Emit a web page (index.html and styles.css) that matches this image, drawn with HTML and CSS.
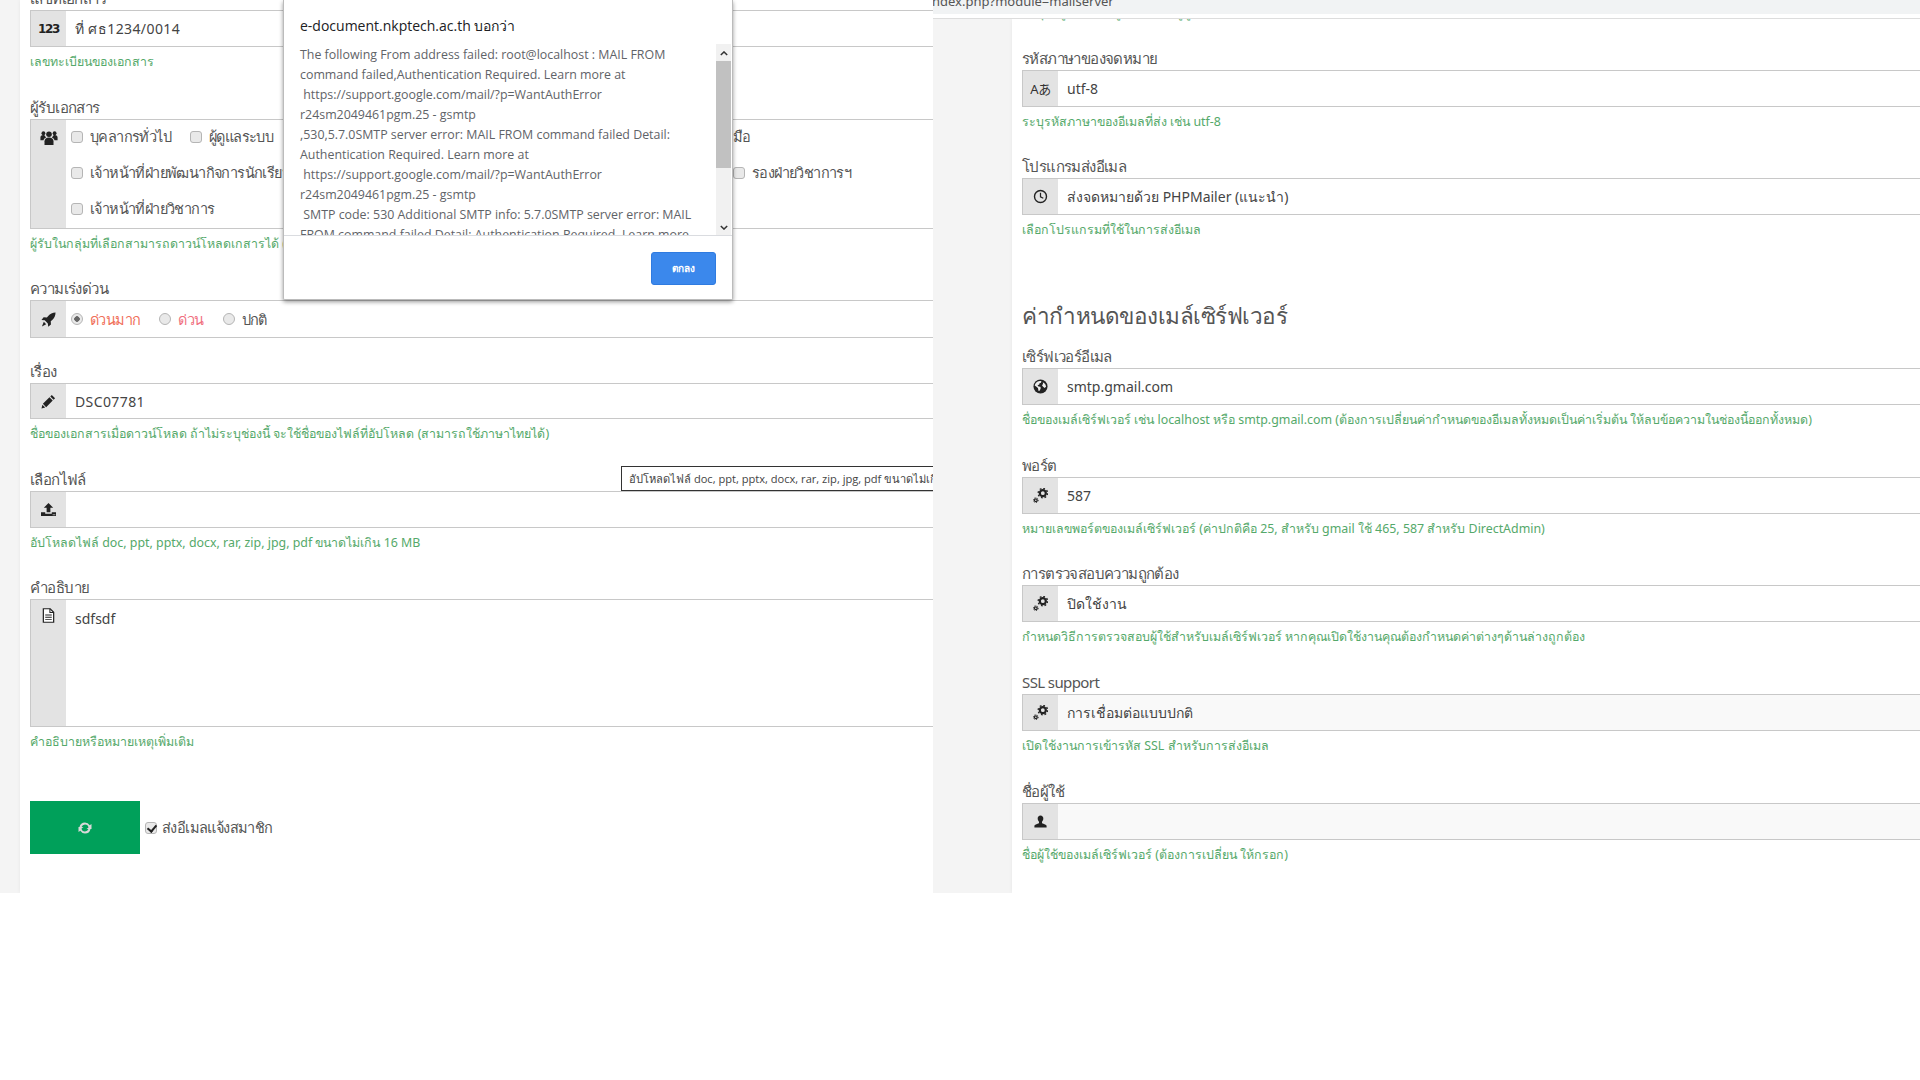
FILE: index.html
```html
<!DOCTYPE html>
<html lang="th">
<head>
<meta charset="utf-8">
<title>e-document</title>
<link rel="stylesheet" href="styles.css">
</head>
<body>
<svg class="sprite" aria-hidden="true">
  <symbol id="i-users" viewBox="0 0 16 14"><circle cx="8" cy="4" r="2.6"/><path d="M3.8 14v-3.6C3.8 8.4 5.5 7 8 7s4.200 1.400 4.200 3.400V14z"/><circle cx="2.800" cy="3" r="1.800"/><circle cx="13.200" cy="3" r="1.800"/><path d="M0 9.500V7c0-1.300 1-2.300 2.600-2.300.5 0 1 .1 1.400.4C4.400 6 5 6.600 5.400 6.900 3.800 7.500 3 8.500 2.900 9.500zM16 9.500V7c0-1.300-1-2.300-2.600-2.300-.5 0-1 .1-1.400.4-.4.900-1 1.500-1.400 1.800 1.600.6 2.400 1.600 2.500 2.600z"/></symbol>
  <symbol id="i-rocket" viewBox="0 0 16 16"><path d="M15.500.5c-3.200.2-5.800 1.500-7.800 3.700L6.300 5.800 2.800 5.600.5 8.500l3.500.4 3.300 3.300.4 3.500 2.900-2.300-.2-3.500 1.600-1.400c2.200-2 3.500-4.600 3.500-8z"/><path d="M3 10.500l2.500 2.500L1 15.500z"/></symbol>
  <symbol id="i-pencil" viewBox="0 0 16 16"><path d="M11.500 1l3.500 3.500-1.600 1.600-3.500-3.500zM9 3.500L12.500 7 5.500 14 2 10.500zM1.500 11.500L4.500 14.500.5 15.500z"/></symbol>
  <symbol id="i-upload" viewBox="0 0 16 16"><path d="M8 1l5 5H10v5H6V6H3zM0 11h4.500v1.500h7V11H16v4H0z"/><path d="M12.500 13h1v1h-1zM14.200 13h1v1h-1z" fill="#e3e3e3"/></symbol>
  <symbol id="i-file" viewBox="0 0 14 16"><path d="M1.500.8h7.300l3.700 3.700v10.700h-11z" fill="#fff" stroke="#222" stroke-width="1.300"/><path d="M8.500.8v4h4" fill="none" stroke="#222" stroke-width="1.100"/><path d="M3.500 7h7v1h-7zM3.500 9.300h7v1h-7zM3.500 11.600h7v1h-7z"/></symbol>
  <symbol id="i-refresh" viewBox="0 0 16 16"><path d="M8 2.500a5.500 5.500 0 0 1 4.700 2.700L14.500 4v5H9.500l2-1.500A3.500 3.500 0 0 0 8 4.500 3.600 3.600 0 0 0 4.600 7H2.500A5.600 5.600 0 0 1 8 2.500zM8 13.500a5.500 5.500 0 0 1-4.700-2.700L1.500 12V7h5l-2 1.500A3.500 3.500 0 0 0 8 11.500 3.600 3.600 0 0 0 11.400 9h2.100A5.600 5.600 0 0 1 8 13.500z"/></symbol>
  <symbol id="i-clock" viewBox="0 0 16 16"><circle cx="8" cy="8" r="6.400" fill="none" stroke="#222" stroke-width="1.500"/><path d="M8 4v4.300l3 1.500" fill="none" stroke="#222" stroke-width="1.300"/></symbol>
  <symbol id="i-globe" viewBox="0 0 16 16"><circle cx="8" cy="8" r="7.500"/><path d="M4.500 2.800C6 2 7.500 1.900 9 2.300L8.500 4l-1.500.5L6.500 6 4.800 6.500l1 1.500 2 .2.500 1.500-1 2.500-1.400.5-.6-3L3 7.800 1.800 6.800C2.300 5 3.200 3.700 4.500 2.800zM10.500 3.500l2.500 1.800 1 2.700-1.500 1.500-1.800-1.200-1.200-1.800 1.200-.8z" fill="#eee"/></symbol>
  <symbol id="i-cogs" viewBox="0 0 16 16"><circle cx="10.500" cy="5.500" r="3.200" fill="none" stroke="#222" stroke-width="2.400"/><circle cx="10.500" cy="5.500" r="5" fill="none" stroke="#222" stroke-width="1.500" stroke-dasharray="1.900 2"/><circle cx="3" cy="13" r="1.500" fill="none" stroke="#222" stroke-width="1.300"/><circle cx="3" cy="13" r="2.600" fill="none" stroke="#222" stroke-width="1" stroke-dasharray="1.200 1.400"/></symbol>
  <symbol id="i-user" viewBox="0 0 16 16"><path d="M8 1.500c1.900 0 3 1.400 3 3.300 0 1.300-.6 2.700-1.400 3.400v1.300c0 .7 4.400 1.400 4.900 3v2h-13v-2c.5-1.600 4.900-2.300 4.900-3V8.200C5.600 7.500 5 6.100 5 4.800c0-1.900 1.100-3.300 3-3.300z"/></symbol>
  <symbol id="i-up" viewBox="0 0 10 6"><path d="M1 5l4-4 4 4" fill="none" stroke="#333" stroke-width="1.800"/></symbol>
  <symbol id="i-down" viewBox="0 0 10 6"><path d="M1 1l4 4 4-4" fill="none" stroke="#333" stroke-width="1.800"/></symbol>
</svg>

<main class="stage">
  <section class="win win-left">
    <div class="sheet sheet-left">
      <div class="field">
        <label class="lbl">เลขที่เอกสาร</label>
        <div class="box"><span class="addon"><b class="num-icon">123</b></span><div class="val val-wide">ที่ ศธ1234/0014</div></div>
        <p class="help">เลขทะเบียนของเอกสาร</p>
      </div>
      <div class="field">
        <label class="lbl">ผู้รับเอกสาร</label>
        <div class="box box-groups"><span class="addon addon-top"><svg class="ico ico-users"><use href="#i-users"/></svg></span>
          <div class="groups">
            <div class="grow"><label class="chk"><input type="checkbox">บุคลากรทั่วไป</label><label class="chk"><input type="checkbox">ผู้ดูแลระบบ</label><span class="chk far-a">มือ</span></div>
            <div class="grow"><label class="chk"><input type="checkbox">เจ้าหน้าที่ฝ่ายพัฒนากิจการนักเรียน</label><label class="chk far-b"><input type="checkbox">รองฝ่ายวิชาการฯ</label></div>
            <div class="grow"><label class="chk"><input type="checkbox">เจ้าหน้าที่ฝ่ายวิชาการ</label></div>
          </div>
        </div>
        <p class="help">ผู้รับในกลุ่มที่เลือกสามารถดาวน์โหลดเกสารได้ (สามารถเลือกได้หลายกลุ่ม)</p>
      </div>
      <div class="field field-nohelp">
        <label class="lbl">ความเร่งด่วน</label>
        <div class="box box-urgent"><span class="addon"><svg class="ico"><use href="#i-rocket"/></svg></span>
          <div class="radios">
            <label class="rad red"><input type="radio" name="u" checked>ด่วนมาก</label>
            <label class="rad pink"><input type="radio" name="u">ด่วน</label>
            <label class="rad"><input type="radio" name="u">ปกติ</label>
          </div>
        </div>
      </div>
      <div class="field">
        <label class="lbl">เรื่อง</label>
        <div class="box box-36"><span class="addon"><svg class="ico"><use href="#i-pencil"/></svg></span><div class="val val-wide">DSC07781</div></div>
        <p class="help">ชื่อของเอกสารเมื่อดาวน์โหลด ถ้าไม่ระบุช่องนี้ จะใช้ชื่อของไฟล์ที่อัปโหลด (สามารถใช้ภาษาไทยได้)</p>
      </div>
      <div class="field">
        <label class="lbl">เลือกไฟล์</label>
        <div class="box"><span class="addon"><svg class="ico"><use href="#i-upload"/></svg></span><div class="val"></div></div>
        <p class="help">อัปโหลดไฟล์ doc, ppt, pptx, docx, rar, zip, jpg, pdf ขนาดไม่เกิน 16 MB</p>
      </div>
      <div class="field">
        <label class="lbl">คำอธิบาย</label>
        <div class="box box-area"><span class="addon addon-top addon-file"><svg class="ico"><use href="#i-file"/></svg></span><div class="val val-area">sdfsdf</div></div>
        <p class="help">คำอธิบายหรือหมายเหตุเพิ่มเติม</p>
      </div>
      <div class="actions">
        <button class="save" type="button"><svg class="ico-save"><use href="#i-refresh"/></svg></button>
        <label class="chk chk-mail"><input type="checkbox" checked>ส่งอีเมลแจ้งสมาชิก</label>
      </div>
    </div>
    <div class="tip">อัปโหลดไฟล์ doc, ppt, pptx, docx, rar, zip, jpg, pdf ขนาดไม่เกิน 16 MB</div>
  </section>

  <section class="win win-right">
    <div class="urlbar"><span class="url">ndex.php?module=mailserver</span></div>
    <div class="urlline"></div>
    <div class="rbody">
      <div class="sheet sheet-right">
        <p class="help help-clipped">ระบุที่อยู่อีเมลของผู้ส่ง สำหรับผู้ดูแลระบบ</p>
        <div class="field field-after-clip">
          <label class="lbl">รหัสภาษาของจดหมาย</label>
          <div class="box"><span class="addon"><span class="lang-icon">Aあ</span></span><div class="val">utf-8</div></div>
          <p class="help">ระบุรหัสภาษาของอีเมลที่ส่ง เช่น utf-8</p>
        </div>
        <div class="field">
          <label class="lbl">โปรแกรมส่งอีเมล</label>
          <div class="box"><span class="addon"><svg class="ico"><use href="#i-clock"/></svg></span><div class="val">ส่งจดหมายด้วย PHPMailer (แนะนำ)</div></div>
          <p class="help">เลือกโปรแกรมที่ใช้ในการส่งอีเมล</p>
        </div>
        <h2 class="head">ค่ากำหนดของเมล์เซิร์ฟเวอร์</h2>
        <div class="field">
          <label class="lbl">เซิร์ฟเวอร์อีเมล</label>
          <div class="box"><span class="addon"><svg class="ico"><use href="#i-globe"/></svg></span><div class="val">smtp.gmail.com</div></div>
          <p class="help">ชื่อของเมล์เซิร์ฟเวอร์ เช่น localhost หรือ smtp.gmail.com (ต้องการเปลี่ยนค่ากำหนดของอีเมลทั้งหมดเป็นค่าเริ่มต้น ให้ลบข้อความในช่องนี้ออกทั้งหมด)</p>
        </div>
        <div class="field">
          <label class="lbl">พอร์ต</label>
          <div class="box"><span class="addon"><svg class="ico"><use href="#i-cogs"/></svg></span><div class="val">587</div></div>
          <p class="help">หมายเลขพอร์ตของเมล์เซิร์ฟเวอร์ (ค่าปกติคือ 25, สำหรับ gmail ใช้ 465, 587 สำหรับ DirectAdmin)</p>
        </div>
        <div class="field">
          <label class="lbl">การตรวจสอบความถูกต้อง</label>
          <div class="box"><span class="addon"><svg class="ico"><use href="#i-cogs"/></svg></span><div class="val">ปิดใช้งาน</div></div>
          <p class="help">กำหนดวิธีการตรวจสอบผู้ใช้สำหรับเมล์เซิร์ฟเวอร์ หากคุณเปิดใช้งานคุณต้องกำหนดค่าต่างๆด้านล่างถูกต้อง</p>
        </div>
        <div class="field">
          <label class="lbl">SSL support</label>
          <div class="box box-off"><span class="addon"><svg class="ico"><use href="#i-cogs"/></svg></span><div class="val">การเชื่อมต่อแบบปกติ</div></div>
          <p class="help">เปิดใช้งานการเข้ารหัส SSL สำหรับการส่งอีเมล</p>
        </div>
        <div class="field">
          <label class="lbl">ชื่อผู้ใช้</label>
          <div class="box box-off"><span class="addon"><svg class="ico"><use href="#i-user"/></svg></span><div class="val"></div></div>
          <p class="help">ชื่อผู้ใช้ของเมล์เซิร์ฟเวอร์ (ต้องการเปลี่ยน ให้กรอก)</p>
        </div>
      </div>
    </div>
  </section>

  <div class="dialog" role="alertdialog">
    <div class="dlg-title">e-document.nkptech.ac.th บอกว่า</div>
    <div class="dlg-body">
      <div class="dlg-text">The following From address failed: root@localhost : MAIL FROM
command failed,Authentication Required. Learn more at
 https://support.google.com/mail/?p=WantAuthError
r24sm2049461pgm.25 - gsmtp
,530,5.7.0SMTP server error: MAIL FROM command failed Detail:
Authentication Required. Learn more at
 https://support.google.com/mail/?p=WantAuthError
r24sm2049461pgm.25 - gsmtp
 SMTP code: 530 Additional SMTP info: 5.7.0SMTP server error: MAIL
FROM command failed Detail: Authentication Required. Learn more</div>
      <div class="scroll">
        <svg class="arrow"><use href="#i-up"/></svg>
        <div class="thumb"></div>
        <svg class="arrow arrow-down"><use href="#i-down"/></svg>
      </div>
    </div>
    <div class="dlg-foot"><button class="ok" type="button">ตกลง</button></div>
  </div>
</main>
</body>
</html>
```

FILE: styles.css
```css
* { box-sizing: border-box; }
html, body { margin: 0; padding: 0; background: #fff; overflow: hidden; }
body { font-family: "Noto Sans", "Open Sans", sans-serif; color: #555; }
.sprite { width: 0; height: 0; position: absolute; }

.stage { position: relative; display: flex; height: 893px; }
.win { position: relative; overflow: hidden; height: 893px; }
.win-left { width: 933px; flex: none; display: flex; background: #f4f4f4; padding-left: 20px; }
.win-right { flex: 1; min-width: 0; display: flex; flex-direction: column; background: #f4f4f4; }

.sheet { flex: 1; min-width: 0; background: #fff; padding-left: 10px; box-shadow: 0 0 4px rgba(0, 0, 0, .06); }
.sheet-left > .field:first-child { margin-top: -12px; }

.field { margin-bottom: 25.67px; }
.field-nohelp { margin-bottom: 22.7px; }
.lbl { display: block; height: 20px; line-height: 20px; margin-bottom: 2px; font-size: 15px; letter-spacing: -.6px; color: #555; white-space: nowrap; }
.box { display: flex; height: 37px; width: 1400px; border: 1px solid #c8c8c8; border-width: 1px 0 1px 1px; background: #fff; }
.box-36 { height: 36px; }
.box-groups { height: 110px; }
.box-urgent { height: 38px; }
.box-area { height: 128px; }
.box-off { background: #f9f9f9; }
.addon { flex: none; width: 35px; background: #e3e3e3; display: flex; align-items: center; justify-content: center; color: #222; }
.addon-top { align-items: flex-start; padding-top: 10px; }
.addon-file { padding-top: 8px; }
.ico { width: 15px; height: 15px; fill: #222; display: block; }
.ico-users { height: 15px; width: 18px; }
.num-icon { font-size: 12px; letter-spacing: -1.300px; color: #222; font-family: "DejaVu Sans", sans-serif; font-weight: 700; }
.lang-icon { font-size: 13px; color: #333; font-family: "Noto Sans", "Noto Sans CJK JP", sans-serif; white-space: nowrap; letter-spacing: -.5px; }
.val { flex: 1; padding-left: 9px; line-height: 36px; font-size: 14px; color: #444; white-space: nowrap; }
.val-wide { letter-spacing: .4px; }
.val-area { line-height: 20px; padding-top: 9px; }
.help { margin: 5px 0 0; height: 19px; line-height: 20px; font-size: 12.400px; color: #55a96a; white-space: nowrap; }

.groups { padding-left: 5px; margin-top: -1px; }
.grow { display: flex; height: 36px; align-items: center; }
.chk { display: inline-flex; align-items: center; color: #555; font-size: 14.500px; letter-spacing: -.6px; white-space: nowrap; margin-right: 19px; }
.chk input, .rad input { appearance: none; -webkit-appearance: none; margin: 0; flex: none; background: #e9e9e9; border: 1px solid #b5b5b5; }
.chk input { width: 12px; height: 12px; border-radius: 3px; margin-right: 7px; position: relative; }
.chk input:checked::after { content: ""; position: absolute; left: 3px; top: 0; width: 4px; height: 7px; border: solid #222; border-width: 0 2px 2px 0; transform: rotate(40deg); }
.far-a { position: absolute; left: 733px; margin: 0; }
.far-b { position: absolute; left: 733px; margin: 0; }

.radios { display: flex; align-items: center; padding-left: 5px; }
.rad { display: inline-flex; align-items: center; font-size: 14.500px; letter-spacing: -.6px; color: #555; white-space: nowrap; margin-right: 19px; }
.rad.red { color: #f0705a; }
.rad.pink { color: #f07080; }
.rad input { width: 12px; height: 12px; border-radius: 50%; margin-right: 7px; }
.rad input:checked { background: radial-gradient(circle, #666 0 2.500px, #e9e9e9 3px); }

.actions { display: flex; align-items: center; margin-top: 50px; }
.save { width: 110px; height: 53px; border: 0; background: #00a05a; display: flex; align-items: center; justify-content: center; padding: 0; }
.ico-save { width: 16px; height: 16px; fill: #d8d8d8; }
.chk-mail { margin-left: 5px; }
.chk-mail input { margin-right: 5px; }

.tip { position: absolute; left: 621px; top: 466px; height: 25px; padding: 0 7px; line-height: 23px; border: 1px solid #333; background: #fff; color: #444; font-size: 11.100px; font-family: "Open Sans", "Noto Sans", sans-serif; white-space: nowrap; }

.urlbar { height: 14px; flex: none; background: #f1f3f4; overflow: hidden; }
.url { display: block; margin: -8px 0 0 -1px; font-size: 13px; line-height: 18px; color: #555; }
.urlline { height: 5px; flex: none; background: #fff; border-bottom: 1px solid #ddd; }
.rbody { flex: 1; display: flex; padding-left: 79px; min-height: 0; overflow: hidden; }
.help-clipped { margin: -16px 0 25.67px; }

.head { margin: 56.67px 0 10px; height: 40px; line-height: 40px; font-size: 22.500px; font-weight: 400; letter-spacing: -.5px; color: #555; white-space: nowrap; }

.dialog { position: absolute; left: 283px; top: 0; width: 450px; height: 300px; background: #fff; display: flex; flex-direction: column; border: 1px solid #bbb; border-top: 0; border-radius: 0 0 2px 2px; box-shadow: 0 2px 4px rgba(0, 0, 0, .4); }
.dlg-title { flex: none; height: 44px; padding: 15px 16px 0; font-size: 14px; line-height: 22px; color: #202124; font-family: "Open Sans", "Noto Sans", sans-serif; white-space: nowrap; }
.dlg-body { flex: none; height: 191px; display: flex; justify-content: space-between; padding-right: 1px; overflow: hidden; }
.dlg-text { padding: 1px 0 0 16px; font-size: 12.400px; line-height: 20px; color: #5f6368; white-space: pre; font-family: "Open Sans", "Noto Sans", sans-serif; }
.scroll { flex: none; width: 15px; height: 191px; background: #f1f1f1; display: flex; flex-direction: column; align-items: center; }
.arrow { width: 8px; height: 5px; margin-top: 7px; flex: none; }
.arrow-down { margin-top: 57px; }
.thumb { width: 15px; height: 107px; margin-top: 5px; background: #c1c1c1; flex: none; }
.dlg-foot { flex: 1; border-top: 1px solid #dadce0; padding: 16px 16px 0 0; display: flex; justify-content: flex-end; align-items: flex-start; }
.ok { width: 65px; height: 33px; border: 1px solid #2f7be0; border-radius: 3px; background: #3b88ec; color: #fff; font-size: 10px; font-weight: 700; padding: 0; font-family: "Noto Sans", sans-serif; }
```
